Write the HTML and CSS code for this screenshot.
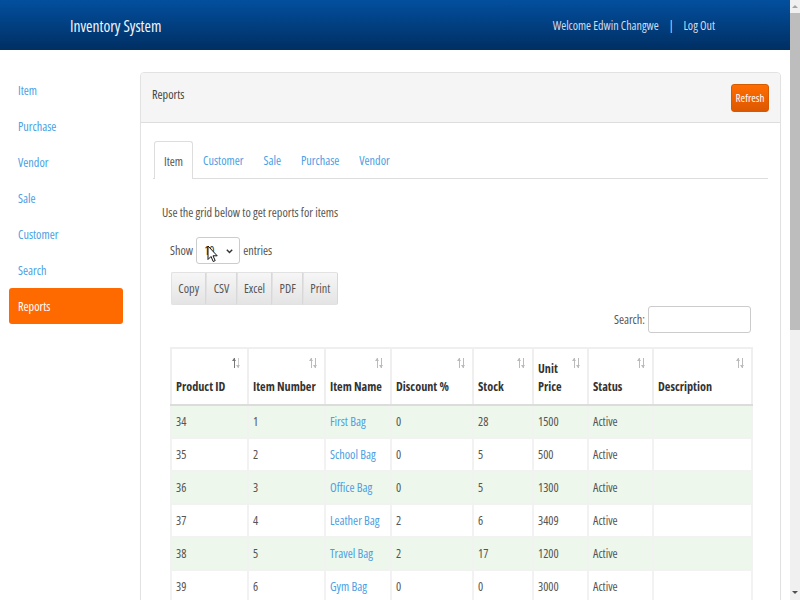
FILE: index.html
```html
<!DOCTYPE html>
<html>
<head>
<meta charset="utf-8">
<title>Inventory System</title>
<link rel="stylesheet" href="styles.css">
</head>
<body>
<header class="topbar">
  <div class="brand">Inventory System</div>
  <div class="userbar"><span>Welcome Edwin Changwe</span><span class="sep">|</span><a href="#">Log Out</a></div>
</header>
<div class="layout">
  <nav class="sidebar">
    <a href="#">Item</a>
    <a href="#">Purchase</a>
    <a href="#">Vendor</a>
    <a href="#">Sale</a>
    <a href="#">Customer</a>
    <a href="#">Search</a>
    <a href="#" class="active">Reports</a>
  </nav>
  <main class="content">
    <section class="panel">
      <div class="panel-head"><span>Reports</span><button class="btn-refresh">Refresh</button></div>
      <div class="panel-body">
        <ul class="tabs">
          <li class="active">Item</li><li>Customer</li><li>Sale</li><li>Purchase</li><li>Vendor</li>
        </ul>
        <div class="tab-pane">
          <p class="intro">Use the grid below to get reports for items</p>
          <div class="dt">
            <div class="dt-length">Show <span class="select">10<svg class="chev" width="7" height="5" viewBox="0 0 7 5"><path d="M0.8 0.8 L3.5 3.6 L6.2 0.8" fill="none" stroke="#333" stroke-width="1.4"/></svg></span> entries
              <svg class="cursor" width="12" height="18" viewBox="0 0 12 18"><path d="M1 1 L1 14.5 L4 11.5 L6.2 16.5 L8.2 15.6 L6 10.8 L10.2 10.8 Z" fill="#fff" stroke="#111" stroke-width="1" stroke-linejoin="round"/></svg>
            </div>
            <div class="dt-buttons"><button>Copy</button><button>CSV</button><button>Excel</button><button>PDF</button><button>Print</button></div>
            <div class="dt-search">Search: <input type="text"></div>
            <table class="grid">
              <colgroup>
                <col style="width:77px"><col style="width:77px"><col style="width:66px"><col style="width:82px"><col style="width:60px"><col style="width:55px"><col style="width:65px"><col style="width:99px">
              </colgroup>
              <thead>
                <tr>
                  <th class="sorted">Product ID<i class="sort"></i></th>
                  <th>Item Number<i class="sort"></i></th>
                  <th>Item Name<i class="sort"></i></th>
                  <th>Discount %<i class="sort"></i></th>
                  <th>Stock<i class="sort"></i></th>
                  <th>Unit Price<i class="sort"></i></th>
                  <th>Status<i class="sort"></i></th>
                  <th>Description<i class="sort"></i></th>
                </tr>
              </thead>
              <tbody>
                <tr><td>34</td><td>1</td><td><a href="#">First Bag</a></td><td>0</td><td>28</td><td>1500</td><td>Active</td><td></td></tr>
                <tr><td>35</td><td>2</td><td><a href="#">School Bag</a></td><td>0</td><td>5</td><td>500</td><td>Active</td><td></td></tr>
                <tr><td>36</td><td>3</td><td><a href="#">Office Bag</a></td><td>0</td><td>5</td><td>1300</td><td>Active</td><td></td></tr>
                <tr><td>37</td><td>4</td><td><a href="#">Leather Bag</a></td><td>2</td><td>6</td><td>3409</td><td>Active</td><td></td></tr>
                <tr><td>38</td><td>5</td><td><a href="#">Travel Bag</a></td><td>2</td><td>17</td><td>1200</td><td>Active</td><td></td></tr>
                <tr><td>39</td><td>6</td><td><a href="#">Gym Bag</a></td><td>0</td><td>0</td><td>3000</td><td>Active</td><td></td></tr>
                <tr><td>40</td><td>7</td><td><a href="#">Laptop Bag</a></td><td>0</td><td>12</td><td>2500</td><td>Active</td><td></td></tr>
                <tr><td>41</td><td>8</td><td><a href="#">Hand Bag</a></td><td>0</td><td>9</td><td>1800</td><td>Active</td><td></td></tr>
                <tr><td>42</td><td>9</td><td><a href="#">Sports Bag</a></td><td>0</td><td>4</td><td>2200</td><td>Active</td><td></td></tr>
                <tr><td>43</td><td>10</td><td><a href="#">Beach Bag</a></td><td>0</td><td>7</td><td>900</td><td>Active</td><td></td></tr>
              </tbody>
            </table>
            <div class="dt-foot">Showing 1 to 10 of 12 entries</div>
          </div>
        </div>
      </div>
    </section>
  </main>
</div>
<div class="scrollbar"><span class="sb-btn up"></span><span class="sb-thumb"></span><span class="sb-fill"></span><span class="sb-btn down"></span></div>
</body>
</html>
```
FILE: styles.css
```css
html { background: #fff; }
body {
  margin: 0 10px 0 0;
  font-family: "Open Sans", "Noto Sans", sans-serif;
  font-stretch: 75%;
  font-size: 12.2px;
  line-height: 18px;
  color: #555;
}
button, input { font-family: inherit; font-stretch: 75%; }

.topbar {
  height: 50px;
  box-sizing: border-box;
  padding: 2px 75px 0 70px;
  background: linear-gradient(#034f9e, #002f63);
  display: flex;
  align-items: center;
  justify-content: space-between;
  color: #fff;
}
.brand { font-size: 15.5px; color: #f2f5fa; }
.userbar { display: flex; gap: 10px; color: #d3dcea; font-size: 12px; }
.userbar a { color: #d3dcea; text-decoration: none; }

.layout { display: flex; padding-top: 22px; }
.sidebar { width: 114px; flex: none; margin: 0 17px 0 9px; display: flex; flex-direction: column; }
.sidebar a {
  height: 36px; line-height: 38px; padding-left: 9px;
  color: #4aa0e4; text-decoration: none; border-radius: 3px;
}
.sidebar a.active { background: #ff6a00; color: #fff; }

.content { flex: 1; padding-right: 9px; min-width: 0; }
.panel { border: 1px solid #e2e2e2; border-radius: 4px; box-shadow: 0 1px 1px rgba(0,0,0,0.04); }
.panel-head {
  height: 49px; background: #f5f5f5; border-bottom: 1px solid #ddd; border-radius: 4px 4px 0 0;
  display: flex; align-items: center; justify-content: space-between; padding: 0 11px;
  color: #444; line-height: 18px;
}
.panel-head span { margin-top: -5px; }
.btn-refresh {
  font-size: 11px; color: #fff; border: 1px solid #d65a00; border-radius: 3px;
  background: linear-gradient(#ff6d00, #dc5800); height: 28px; width: 38px; padding: 0;
}
.panel-body { padding: 18px 12px 20px 12px; }
.tabs { list-style: none; margin: 0; padding: 0 0 0 1px; display: flex; border-bottom: 1px solid #ddd; }
.tabs li { height: 36px; line-height: 39px; padding: 0 10px; color: #4aa0e4; }
.tabs li.active { color: #555; border: 1px solid #ddd; border-bottom: 0; background: #fff; border-radius: 3px 3px 0 0; margin-bottom: -1px; height: 37px; padding: 0 9px; }
.tab-pane { padding: 0 9px; }
.intro { margin: 25px 0 15px 0; }
.dt { padding: 0 8px; }
.dt-length { display: flex; align-items: center; gap: 3px; position: relative; height: 27px; }
.select {
  width: 44px; height: 27px; box-sizing: border-box; border: 1px solid #ccc; border-radius: 3px; background: #fff;
  display: flex; align-items: center; justify-content: space-between; padding: 0 6px 0 7px; color: #333;
}
.chev { margin-top: 1px; }
.cursor { position: absolute; left: 37px; top: 8px; }
.dt-buttons { display: flex; margin-top: 8px; margin-left: 1px; }
.dt-buttons button {
  font-size: 12.2px; color: #555; height: 33px; padding: 0 6.3px;
  background: linear-gradient(#f6f6f6, #e4e4e4); border: 1px solid #e2e2e2; border-right: 1px solid #d8d8d8;
}
.dt-buttons button:first-child { border-radius: 2px 0 0 2px; }
.dt-buttons button:last-child { border-radius: 0 2px 2px 0; }
.dt-search { display: flex; justify-content: flex-end; align-items: center; gap: 3px; margin-top: 1px; }
.dt-search input { width: 103px; height: 27px; box-sizing: border-box; border: 1px solid #ccc; border-radius: 3px; }
.grid { width: 581px; table-layout: fixed; border-collapse: collapse; margin-top: 14px; border: 1px solid #e4e4e4; }
.grid th {
  text-align: left; vertical-align: bottom; color: #333; height: 47px; padding: 0 4px 8px 4px;
  border: 2px solid #efefef; border-bottom: 2px solid #dcdcdc; position: relative; font-weight: 700;
}
.sort {
  position: absolute; top: 9px; right: 7px; width: 8px; height: 10px;
  background:
    linear-gradient(#bbb, #bbb) 1.5px 0 / 1px 10px no-repeat,
    linear-gradient(#bbb, #bbb) 5.5px 0 / 1px 10px no-repeat;
}
.sort::before, .sort::after {
  content: ""; position: absolute; width: 0; height: 0; border-left: 2px solid transparent; border-right: 2px solid transparent;
}
.sort::before { left: 0; top: 0; border-bottom: 3px solid #bbb; }
.sort::after { left: 4px; bottom: 0; border-top: 3px solid #bbb; }
.sorted .sort {
  background:
    linear-gradient(#777, #777) 1.5px 0 / 1px 10px no-repeat,
    linear-gradient(#ccc, #ccc) 5.5px 0 / 1px 10px no-repeat;
}
.sorted .sort::before { border-bottom-color: #777; }
.grid td { height: 31px; padding: 0 4px; border: 2px solid #f2f2f2; white-space: nowrap; overflow: hidden; }
.grid tbody tr:nth-child(odd) td { background: #edf7ec; }
.grid a { color: #4aa0e4; text-decoration: none; }
.dt-foot { padding: 10px 0; }

.scrollbar {
  position: fixed; top: 0; right: 0; bottom: 0; width: 10px; background: #f0f0f0;
  display: flex; flex-direction: column;
}
.sb-btn { height: 13px; flex: none; position: relative; }
.sb-btn::after {
  content: ""; position: absolute; left: 2px; top: 5px; border-left: 3px solid transparent; border-right: 3px solid transparent;
}
.sb-btn.up::after { border-bottom: 3px solid #a3a3a3; }
.sb-btn.down::after { border-top: 3px solid #505050; top: 4px; }
.sb-thumb { height: 317px; flex: none; background: #bdbdbd; }
.sb-fill { flex: 1; }
```
